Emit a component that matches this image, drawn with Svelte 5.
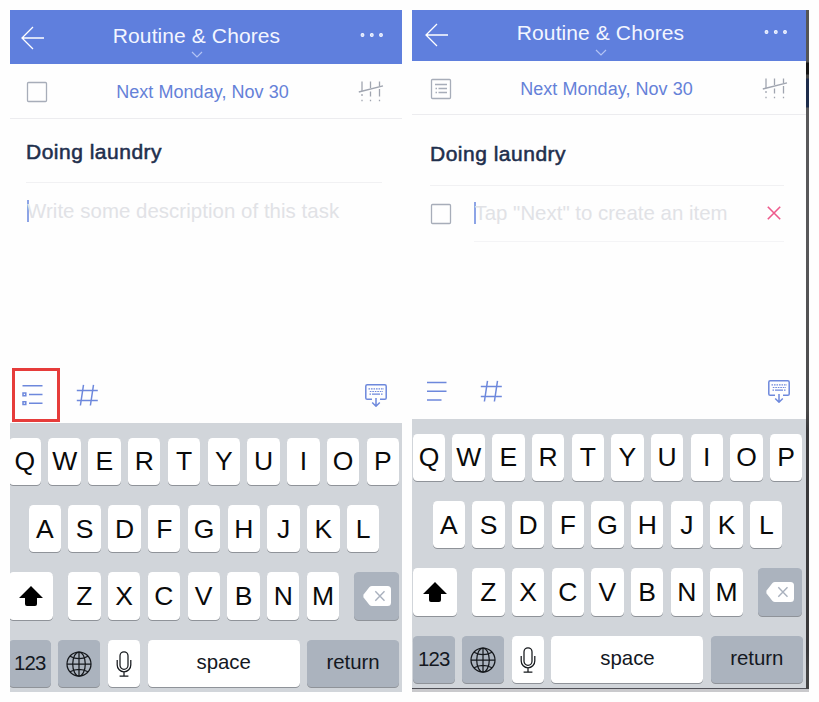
<script>
  const rows = ['QWERTYUIOP', 'ASDFGHJKL', 'ZXCVBNM'].map((r) => r.split(''));
  const phones = [
    { side: 'left', checklist: false },
    { side: 'right', checklist: true }
  ];
</script>

{#snippet checkbox()}
  <svg class="box" width="22" height="22" viewBox="0 0 22 22">
    <rect x="1.5" y="1.5" width="19" height="19" rx="1" />
  </svg>
{/snippet}

<main>
  {#each phones as phone}
    <section class="phone {phone.side}">
      <header>
        <svg class="back" width="24" height="24" viewBox="0 0 24 24">
          <path d="M12 1 L1 12 L12 23 M1 12 H23" />
        </svg>
        <div class="heading">
          <h1>Routine &amp; Chores</h1>
          <svg class="chev" width="12" height="7" viewBox="0 0 12 7"><path d="M1 1 L6 6 L11 1" /></svg>
        </div>
        <svg class="dots" width="26" height="6" viewBox="0 0 26 6">
          <circle cx="3.5" cy="3" r="1.4" /><circle cx="12.8" cy="3" r="1.4" /><circle cx="22" cy="3" r="1.4" />
        </svg>
      </header>

      <div class="date-row">
        {#if phone.checklist}
          <svg class="box" width="22" height="22" viewBox="0 0 22 22">
            <rect x="1.5" y="1.5" width="19" height="19" rx="1" />
            <path d="M5 6.5 H17 M8.5 10.5 H17 M8.5 14.5 H17 M5.5 10.5 H7 M5.5 14.5 H7" />
          </svg>
        {:else}
          {@render checkbox()}
        {/if}
        <span class="date">Next Monday, Nov 30</span>
        <svg class="tally" width="26" height="22" viewBox="0 0 26 22">
          <path d="M4 .5 V10 M4 13 V15 M12.5 .5 V7 M12.5 10.5 V15.5 M21.5 .5 V5 M21.5 8 V15.5 M4 18.7 V20.3 M12.5 18.7 V20.3 M21.5 18.7 V20.3" />
          <path d="M.8 11 L25 4.8" />
        </svg>
      </div>

      <div class="editor">
        <h2>Doing laundry</h2>
        {#if phone.checklist}
          <div class="item">
            {@render checkbox()}
            <div class="field">
              <span class="caret"></span><span class="hint tap">Tap "Next" to create an item</span>
              <svg class="cross" width="16" height="16" viewBox="0 0 16 16"><path d="M1.8 1.8 L14.2 14.2 M14.2 1.8 L1.8 14.2" /></svg>
            </div>
          </div>
        {:else}
          <div class="description">
            <span class="caret"></span><span class="hint">Write some description of this task</span>
          </div>
        {/if}
      </div>

      <div class="toolbar">
        {#if phone.checklist}
          <span class="tool">
            <svg width="22" height="22" viewBox="0 0 22 22"><path d="M1 2.5 H20.5 M1 11.2 H20.5 M1 20 H15.5" /></svg>
          </span>
        {:else}
          <span class="tool marked">
            <svg width="22" height="22" viewBox="0 0 22 22">
              <path d="M.5 1.8 H20.5 M7 10.5 H20.5 M7 19.3 H20.5" />
              <path d="M1 9 H3.8 V11.8 H1 Z M1 17.8 H3.8 V20.6 H1 Z" />
            </svg>
          </span>
        {/if}
        <svg class="hash" width="22" height="22" viewBox="0 0 22 22">
          <path d="M.8 6.5 H21.8 M.8 16.5 H21.8 M7.5 .8 L4.4 21.5 M17.5 .8 L14.4 21.5" />
        </svg>
        <svg class="hide" width="22" height="23" viewBox="0 0 22 23">
          <path d="M7 15.3 H2.2 Q.8 15.3 .8 13.9 V2.2 Q.8 .8 2.2 .8 H19.8 Q21.2 .8 21.2 2.2 V13.9 Q21.2 15.3 19.8 15.3 H15" />
          <path d="M11 14 V22 M7.2 18.5 L11 22.2 L14.8 18.5" />
          <path class="fine" d="M3.5 4.8 H19 M4.8 7.5 H18" stroke-dasharray="1.6 .9" />
          <path class="fine" d="M4.5 10.2 H6 M7 10.2 H15 M16 10.2 H17.5" />
        </svg>
      </div>

      <div class="keyboard">
        <div class="row">
          {#each rows[0] as k}<span class="key">{k}</span>{/each}
        </div>
        <div class="row second">
          {#each rows[1] as k}<span class="key">{k}</span>{/each}
        </div>
        <div class="row">
          <span class="key shift">
            <svg width="24" height="20" viewBox="0 0 24 20"><path d="M12 0 L24 12 H18 V18 Q18 20 16 20 H8 Q6 20 6 18 V12 H0 Z" /></svg>
          </span>
          {#each rows[2] as k}<span class="key">{k}</span>{/each}
          <span class="key gray del">
            <svg width="28" height="20" viewBox="0 0 28 20">
              <path d="M9 0 H24.5 Q28 0 28 3.5 V16.5 Q28 20 24.5 20 H9 Q7.5 20 6.5 19 L.6 11.5 Q0 10 .6 8.5 L6.5 1 Q7.5 0 9 0 Z" fill="#fff" />
              <path d="M12.3 5.3 L21.5 14.7 M21.5 5.3 L12.3 14.7" stroke="#a9b1be" stroke-width="1.4" />
            </svg>
          </span>
        </div>
        <div class="row last">
          <span class="key gray num">123</span>
          <span class="key gray globe">
            <svg width="26" height="26" viewBox="0 0 26 26">
              <circle cx="13" cy="13" r="12" /><ellipse cx="13" cy="13" rx="6.3" ry="12" />
              <path d="M13 1 V25 M1 13 H25 M4 5.2 Q13 10.2 22 5.2 M4 20.8 Q13 15.8 22 20.8" />
            </svg>
          </span>
          <span class="key mic">
            <svg width="16" height="26" viewBox="0 0 16 26">
              <rect x="4" y=".8" width="8" height="17.5" rx="4" />
              <path d="M1.2 9 V14 A6.8 6.8 0 0 0 14.8 14 V9 M8 20.8 V25 M3.6 25 H12.4" />
            </svg>
          </span>
          <span class="key space">space</span>
          <span class="key gray return">return</span>
        </div>
      </div>
    </section>
  {/each}
  <aside></aside>
</main>

<style>
  :global(body) { background: #fff; }
  main {
    box-sizing: border-box;
    width: 819px;
    height: 702px;
    padding: 10px;
    display: flex;
    background: #fefefe;
    font-family: 'Liberation Sans', Arial, sans-serif;
    overflow: hidden;
    white-space: nowrap;
  }
  svg { display: block; flex: none; fill: none; }
  h1, h2 { margin: 0; font-weight: 400; }
  .phone {
    height: 682px;
    display: flex;
    flex-direction: column;
    overflow: hidden;
    flex: none;
  }
  .left { width: 392px; margin-right: 10px; --shift: 0px; --pitch: 7.4px; }
  .right { width: 394px; --shift: 2px; --pitch: 7.3px; }

  header {
    box-sizing: border-box;
    height: 54px;
    padding: 15px 0 0 calc(11px + var(--shift));
    display: flex;
    align-items: flex-start;
    background: #5f7fdd;
  }
  .right header { height: 51px; padding-top: 12px; }
  .back { stroke: #fff; stroke-width: 1.3; margin-top: 1px; }
  .heading { width: 303px; margin-right: 1px; display: flex; flex-direction: column; align-items: center; }
  h1 { font-size: 21px; line-height: 22px; letter-spacing: 0.1px; color: #f3f6ff; }
  .chev { stroke: #b4c4f4; stroke-width: 1.2; margin-top: 4px; }
  .right .chev { margin-top: 5px; }
  .dots { margin: 7px 0 0 10px; fill: #c3d0f8; stroke: #f4f7ff; stroke-width: 1.1; }

  .date-row {
    box-sizing: border-box;
    height: 55px;
    padding: 2px 0 0 calc(16px + var(--shift));
    display: flex;
    align-items: center;
    border-bottom: 1px solid #ececef;
  }
  .right .date-row { height: 54px; }
  .right .date { padding-top: 1px; }
  .box { stroke: #a7adb9; stroke-width: 1.3; }
  .date { width: 309px; text-align: center; font-size: 18px; letter-spacing: 0.05px; color: #6581d8; }
  .tally { stroke: #a0a5b0; stroke-width: 1.3; margin-left: 1px; }

  .editor { padding-left: calc(16px + var(--shift)); flex: 1; }
  h2 {
    box-sizing: border-box;
    width: 356px;
    height: 64px;
    padding-top: 21px;
    font-size: 21px;
    line-height: 24px;
    letter-spacing: 0.5px;
    color: #1f2f4d;
    -webkit-text-stroke: 0.55px #1f2f4d;
    border-bottom: 1px solid #f1f1f3;
  }
  .right h2 { height: 71px; padding-top: 27px; width: 354px; }
  .description, .field { display: flex; align-items: center; }
  .description { height: 55px; }
  .caret { width: 2px; height: 22px; background: #8da4e6; flex: none; }
  .description .caret { margin-left: 0.5px; }
  .hint { font-size: 20.4px; letter-spacing: 0.06px; color: #e1e2e6; margin-left: -1.5px; }
  .description .hint { padding-top: 1px; }
  .tap { letter-spacing: 0.02px; margin-left: -1.5px; }
  .item { display: flex; align-items: center; margin-top: -1px; }
  .field { width: 310px; height: 56px; margin-left: 22px; border-bottom: 1px solid #f4f4f6; }
  .cross { stroke: #ee5a8c; stroke-width: 1.6; margin: 0 2px 0 auto; }

  .toolbar {
    box-sizing: border-box;
    height: 55px;
    padding: 0 0 1px 2px;
    display: flex;
    align-items: center;
    stroke: #6d88dc;
    stroke-width: 1.5;
  }
  .right .toolbar { height: 56px; padding-bottom: 0; }
  .tool { box-sizing: border-box; width: 48px; height: 54px; padding: 13px 0 0 7px; border: 3px solid transparent; }
  .marked { border-color: #e63c3a; }
  .right .tool { padding: 13px 0 0 9px; }
  .hash { margin-left: 16px; }
  .hide { margin-left: 267px; }
  .right .hash { margin-left: 18px; }
  .right .hide { margin-left: 266px; }
  .fine { stroke-width: 1.2; }

  .keyboard {
    box-sizing: border-box;
    height: 269px;
    padding-top: 14.7px;
    background: #d1d5da;
    display: flex;
    flex-direction: column;
    gap: 19.8px;
    flex: none;
  }
  .right .keyboard { height: 273px; border-bottom: 3px solid #c9c9cc; box-shadow: inset 0 -1px #505057; }
  .row { display: flex; gap: var(--pitch); margin-left: -1.3px; }
  .right .row { margin-left: 0.8px; }
  .row.second { margin-left: 18.7px; }
  .right .row.second { margin-left: 20.6px; }
  .key {
    box-sizing: border-box;
    flex: none;
    width: 32.4px;
    height: 47.5px;
    padding-top: 1px;
    display: flex;
    align-items: center;
    justify-content: center;
    border-radius: 4.5px;
    background: #fff;
    box-shadow: 0 1px 0 #8f9399;
    font-size: 26.5px;
    color: #0a0a0a;
  }
  .gray { background: #abb3be; }
  .shift, .del { width: 44.7px; padding-top: 0; }
  .shift { margin-right: 7.4px; }
  .shift svg { fill: #000; }
  .del { margin-left: 7.8px; }
  .num, .space, .return { font-size: 20.4px; color: #14181f; }
  .space, .return { padding: 0 0 1px; }
  .num { width: 42px; letter-spacing: -0.8px; }
  .globe { width: 42.4px; }
  .globe svg, .mic svg { stroke: #15181c; stroke-width: 1.25; }
  .space { width: 152px; }
  .return { width: 92px; }

  aside {
    box-sizing: border-box;
    width: 3px;
    height: 682px;
    border-bottom: 3px solid #c9c9cc;
    background: linear-gradient(#555 0 52px, #151515 53px 64px, #444 65px 68px, #1d2c4b 69px 97px, #58585a 98px 230px, #4b4b4c 400px, #38383a 420px 640px, #444 660px);
  }
</style>
